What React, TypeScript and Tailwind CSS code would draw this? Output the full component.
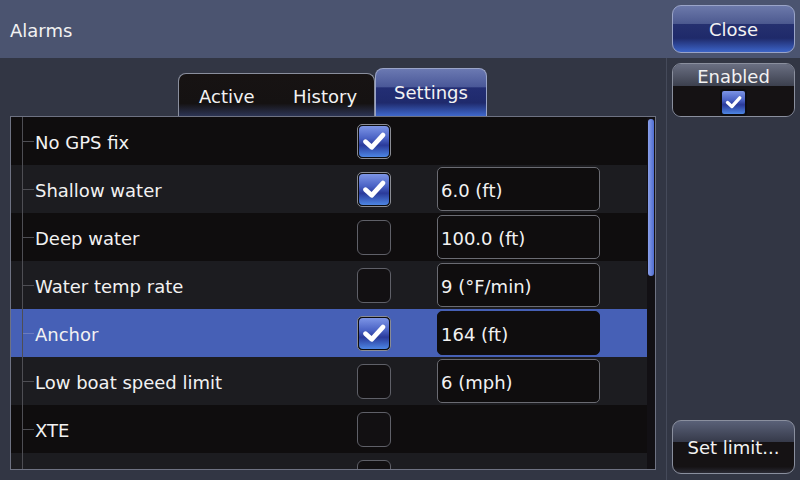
import React from "react";

type Row = { label: string; checked: boolean; value?: string; tone: "dark" | "light" | "sel" };

const rows: Row[] = [
  { label: "No GPS fix", checked: true, tone: "dark" },
  { label: "Shallow water", checked: true, value: "6.0 (ft)", tone: "light" },
  { label: "Deep water", checked: false, value: "100.0 (ft)", tone: "dark" },
  { label: "Water temp rate", checked: false, value: "9 (°F/min)", tone: "light" },
  { label: "Anchor", checked: true, value: "164 (ft)", tone: "sel" },
  { label: "Low boat speed limit", checked: false, value: "6 (mph)", tone: "light" },
  { label: "XTE", checked: false, tone: "dark" },
  { label: "", checked: false, tone: "light" },
];

function Check({ size = 34 }: { size?: number }) {
  return (
    <svg width={size * 0.72} height={size * 0.6} viewBox="0 0 24 20">
      <path d="M3.5 10.5 L9.5 16 L20.5 4" fill="none" stroke="#ffffff" strokeWidth="4.6" strokeLinecap="round" strokeLinejoin="round" />
    </svg>
  );
}

function CheckBox({ checked, small }: { checked: boolean; small?: boolean }) {
  if (small) {
    return (
      <div className="w-[27px] h-[27px] rounded-[4px] border-2 border-[#0c0c10] bg-[linear-gradient(to_bottom,#7d95e6_0%,#4a62c4_40%,#2a3a9a_60%,#4d86e4_100%)] flex items-center justify-center">
        <Check size={24} />
      </div>
    );
  }
  if (checked) {
    return (
      <div className="w-[34px] h-[35px] rounded-[5px] border border-[#8a8c94] p-[1px] bg-[#0c0c10]">
        <div className="w-full h-full rounded-[4px] bg-[linear-gradient(to_bottom,#7d95e6_0%,#4a62c4_40%,#2a3a9a_62%,#4d86e4_100%)] flex items-center justify-center">
          <Check />
        </div>
      </div>
    );
  }
  return <div className="w-[34px] h-[35px] rounded-[6px] border border-[#5f6068] bg-[#121012]" />;
}

export default function App() {
  return (
    <div className="w-[800px] h-[480px] flex flex-col bg-[#323644] font-['DejaVu_Sans',sans-serif] text-[18px] text-[#f2f2f2] overflow-hidden">
      {/* Header */}
      <div className="h-[58px] bg-[#4b5470] flex items-center">
        <div className="flex-1 pl-[10px] pt-[3px]">Alarms</div>
        <div className="w-[123px] h-[48px] mr-[5px] mb-[1px] rounded-[9px] border border-[#9aa4c8] bg-[linear-gradient(to_bottom,#6c79aa_0%,#4d5a90_38%,#25306f_40%,#1f2a6a_70%,#3c64c8_100%)] flex items-center justify-center pt-[1px]">
          Close
        </div>
      </div>

      {/* Body */}
      <div className="flex-1 flex">
        {/* Left */}
        <div className="w-[666px] flex flex-col">
          <div className="h-[58px] flex items-end pl-[178px]">
            <div className="w-[197px] h-[43px] rounded-t-[8px] border border-b-0 border-[#8a8f9e] bg-[linear-gradient(to_bottom,#171313_0%,#151212_70%,#2c3454_100%)] flex items-center">
              <div className="pl-[20px] w-[114px] pt-[2px]">Active</div>
              <div className="pl-0 pt-[2px]">History</div>
            </div>
            <div className="w-[112px] h-[48px] rounded-t-[8px] border border-b-0 border-[#9aa4c8] bg-[linear-gradient(to_bottom,#6b79b2_0%,#4a5898_38%,#232e74_40%,#1f2a6c_72%,#3f68cc_100%)] flex items-center justify-center pb-[0px]">
              Settings
            </div>
          </div>
          <div className="ml-[10px] w-[646px] h-[354px] border border-[#6e7282] bg-[#0f0d0e] flex overflow-hidden">
            <div className="relative w-[636px] h-full overflow-hidden">
              <div className="absolute left-[11px] top-0 bottom-0 w-px bg-[#4e4e54]" />
              {rows.map((r, i) => (
                <div
                  key={i}
                  className={
                    "h-[48px] shrink-0 flex items-center " +
                    (r.tone === "sel" ? "bg-[#4660b6]" : r.tone === "light" ? "bg-[#1c1c20]" : "bg-[#0f0d0e]")
                  }
                >
                  <div className="w-[11px] shrink-0" />
                  <div className={"w-[12px] h-px shrink-0 " + (r.tone === "sel" ? "bg-[#6a7cc0]" : "bg-[#4e4e54]")} />
                  <div className="w-[323px] shrink-0 pl-[1px] pt-[2px]">{r.label}</div>
                  <div className="w-[80px] shrink-0">
                    <CheckBox checked={r.checked} />
                  </div>
                  {r.value && (
                    <div
                      className={
                        "w-[163px] h-[44px] rounded-[5px] flex items-center pl-[3px] pt-[2px] bg-[#0f0d0e] " +
                        (r.tone === "sel" ? "border border-[#0f0d0e]" : "border border-[#6a6b72]")
                      }
                    >
                      {r.value}
                    </div>
                  )}
                </div>
              ))}
            </div>
            <div className="w-[8px] h-full bg-[#121014] pt-[2px] pl-[1px]">
              <div className="w-[6px] h-[157px] rounded-full bg-[linear-gradient(to_right,#8aa0ea,#4f6cd0)]" />
            </div>
          </div>
        </div>
        <div className="w-px bg-[#454a5a]" />
        {/* Right */}
        <div className="flex-1 flex flex-col items-center pt-[5px] pb-[6px]">
          <div className="w-[123px] h-[54px] rounded-[9px] border border-[#8a8f9e] overflow-hidden flex flex-col">
            <div className="h-[22px] bg-[linear-gradient(to_bottom,#6a6f82,#3c404e)] flex justify-center items-start leading-[22px] pt-[2px]">
              Enabled
            </div>
            <div className="flex-1 bg-[#151214] flex justify-center items-end">
              <CheckBox checked small />
            </div>
          </div>
          <div className="flex-1" />
          <div className="w-[123px] h-[54px] rounded-[9px] border border-[#8a8f9e] overflow-hidden flex flex-col bg-[linear-gradient(to_bottom,#5a6178_0%,#363a4a_40%,#151214_41%,#151214_88%,#2a2a34_100%)] items-center justify-center pt-[0px]">
            Set limit...
          </div>
        </div>
      </div>
    </div>
  );
}
